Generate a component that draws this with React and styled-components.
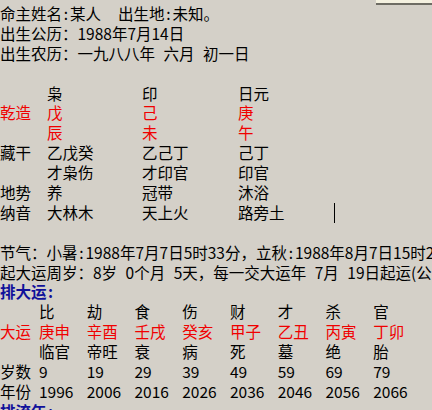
import React from 'react';
import styled, { createGlobalStyle } from 'styled-components';

const RED = '#f00000';
const NAVY = '#10109a';

const GlobalStyle = createGlobalStyle`
  html, body {
    margin: 0;
    padding: 0;
    background: #d4d0c8;
    overflow: hidden;
  }
  body {
    font-family: "Noto Sans CJK SC", "Noto Sans CJK JP", sans-serif;
    font-size: 15.5px;
    color: #000;
  }
`;

const Page = styled.div`
  position: relative;
  width: 432px;
  height: 410px;
  box-sizing: border-box;
  overflow: hidden;
  padding-top: 4px;
  line-height: 19.9px;
  white-space: pre;
  word-spacing: 5px;
`;

// edge of the panel above, visible at the top right
const TopEdge = styled.div`
  position: absolute;
  top: 0;
  right: 0;
  width: 56px;
  height: 3px;
  background: #f4f1e0;
  border-bottom: 2px solid #6e6c64;
`;

const Line = styled.div`
  height: 19.9px;
  color: ${(p) => p.$color || '#000'};
  font-weight: ${(p) => (p.$bold ? 700 : 400)};
`;

const Blank = styled.div`
  height: 19.9px;
`;

const Colon = styled.span`
  display: inline-block;
  width: 8px;
  text-align: center;
`;

const PillarRow = styled.div`
  display: grid;
  grid-template-columns: 47px 95px 96px 96px 1fr;
  height: 19.9px;
  color: ${(p) => (p.$red ? RED : '#000')};
`;

const DayunRow = styled.div`
  display: grid;
  grid-template-columns: 39px repeat(8, 47.75px);
  height: 19.9px;
  color: ${(p) => (p.$red ? RED : '#000')};
`;

const Caret = styled.span`
  width: 1px;
  height: 20px;
  background: #000;
`;

const pillars = [
  { label: '', cells: ['枭', '印', '日元'] },
  { label: '乾造', cells: ['戊', '己', '庚'], red: true },
  { label: '', cells: ['辰', '未', '午'], red: true },
  { label: '藏干', cells: ['乙戊癸', '乙己丁', '己丁'] },
  { label: '', cells: ['才枭伤', '才印官', '印官'] },
  { label: '地势', cells: ['养', '冠带', '沐浴'] },
  { label: '纳音', cells: ['大林木', '天上火', '路旁土'], caret: true },
];

const dayun = [
  { label: '', cells: ['比', '劫', '食', '伤', '财', '才', '杀', '官'] },
  { label: '大运', cells: ['庚申', '辛酉', '壬戌', '癸亥', '甲子', '乙丑', '丙寅', '丁卯'], red: true },
  { label: '', cells: ['临官', '帝旺', '衰', '病', '死', '墓', '绝', '胎'] },
  { label: '岁数', cells: ['9', '19', '29', '39', '49', '59', '69', '79'] },
  { label: '年份', cells: ['1996', '2006', '2016', '2026', '2036', '2046', '2056', '2066'] },
];

const App = () => {
  return (
    <>
      <GlobalStyle />
      <Page>
        <TopEdge />
        <Line>
          命主姓名<Colon>:</Colon>某人  出生地<Colon>:</Colon>未知。
        </Line>
        <Line>出生公历：1988年7月14日</Line>
        <Line>出生农历：一九八八年 六月 初一日</Line>
        <Blank />

        {pillars.map((row, i) => (
          <PillarRow key={i} $red={row.red}>
            <span>{row.label}</span>
            {row.cells.map((c, j) => (
              <span key={j}>{c}</span>
            ))}
            {row.caret && <Caret />}
          </PillarRow>
        ))}
        <Blank />

        <Line>
          节气：小暑<Colon>:</Colon>1988年7月7日5时33分，立秋<Colon>:</Colon>1988年8月7日15时20分
        </Line>
        <Line>起大运周岁：8岁 0个月 5天，每一交大运年 7月 19日起运(公历)</Line>
        <Line $color={NAVY} $bold>
          排大运<Colon>:</Colon>
        </Line>

        {dayun.map((row, i) => (
          <DayunRow key={i} $red={row.red}>
            <span>{row.label}</span>
            {row.cells.map((c, j) => (
              <span key={j}>{c}</span>
            ))}
          </DayunRow>
        ))}
        <Line $color={NAVY} $bold>
          排流年<Colon>:</Colon>
        </Line>
      </Page>
    </>
  );
};

export default App;
